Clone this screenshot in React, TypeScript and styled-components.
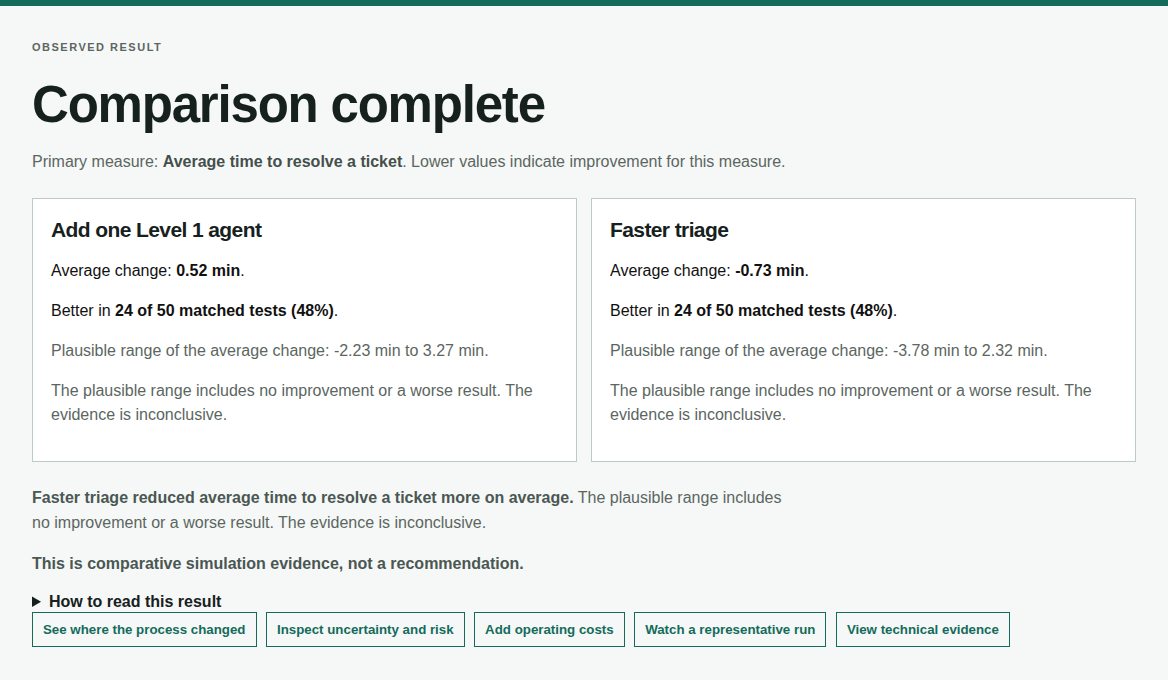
import React from "react";
import styled, { createGlobalStyle } from "styled-components";

const GlobalStyle = createGlobalStyle`
  html, body {
    margin: 0;
    padding: 0;
    background: #f6f8f7;
    font-family: "Liberation Sans", Arial, sans-serif;
  }
`;

const Colors = {
  TEAL: "#146b5c",
  INK: "#16211e",
  MUTED: "#5b6661",
  STRONG_MUTED: "#4a5752",
  BORDER: "#bccbc8",
};

interface IOption {
  name: string;
  change: string;
  better: string;
  range: string;
}

const options: IOption[] = [
  {
    name: "Add one Level 1 agent",
    change: "0.52 min",
    better: "24 of 50 matched tests (48%)",
    range: "-2.23 min to 3.27 min",
  },
  {
    name: "Faster triage",
    change: "-0.73 min",
    better: "24 of 50 matched tests (48%)",
    range: "-3.78 min to 2.32 min",
  },
];

const actions = [
  "See where the process changed",
  "Inspect uncertainty and risk",
  "Add operating costs",
  "Watch a representative run",
  "View technical evidence",
];

const TopBar = styled.div`
  height: 6px;
  background: ${Colors.TEAL};
`;

const Page = styled.main`
  padding: 34px 32px 32px;
`;

const Eyebrow = styled.div`
  font-size: 11px;
  font-weight: 700;
  letter-spacing: 1.5px;
  text-transform: uppercase;
  color: ${Colors.MUTED};
  line-height: 14px;
`;

const Title = styled.h1`
  margin: 22px 0 0;
  font-size: 51px;
  line-height: 58px;
  font-weight: 700;
  letter-spacing: -1.2px;
  color: ${Colors.INK};
`;

const Lead = styled.p`
  margin: 16px 0 0;
  font-size: 16px;
  line-height: 24px;
  color: ${Colors.MUTED};

  strong {
    color: #444f4b;
  }
`;

const CardGrid = styled.div`
  display: grid;
  grid-template-columns: 1fr 1fr;
  gap: 14px;
  margin-top: 24px;
`;

const Card = styled.section`
  background: #fff;
  border: 1px solid ${Colors.BORDER};
  padding: 17px 18px 34px;
`;

const CardTitle = styled.h2`
  margin: 0;
  font-size: 21px;
  line-height: 28px;
  font-weight: 700;
  letter-spacing: -0.6px;
  color: ${Colors.INK};
`;

const Line = styled.p<{ muted?: boolean }>`
  margin: 15px 0 0;
  font-size: 16px;
  line-height: 24px;
  color: ${props => (props.muted ? Colors.MUTED : "#111")};
  & + & {
    margin-top: 16px;
  }
`;

const Summary = styled.p`
  margin: 23px 0 0;
  max-width: 760px;
  font-size: 16px;
  line-height: 25px;
  color: ${Colors.MUTED};

  strong {
    color: ${Colors.STRONG_MUTED};
  }
`;

const Note = styled.p`
  margin: 17px 0 0;
  font-size: 16px;
  line-height: 24px;
  font-weight: 700;
  color: ${Colors.STRONG_MUTED};
`;

const HowTo = styled.details`
  margin-top: 17px;

  summary {
    font-size: 16px;
    line-height: 18px;
    font-weight: 700;
    color: ${Colors.INK};
    cursor: pointer;
  }
`;

const ActionRow = styled.div`
  display: flex;
  flex-wrap: wrap;
  gap: 9.5px;
  margin-top: 1px;
`;

const ActionButton = styled.button`
  height: 35px;
  padding: 0 10px;
  background: transparent;
  border: 1px solid ${Colors.TEAL};
  border-radius: 0;
  font-family: inherit;
  font-size: 13.3px;
  font-weight: 700;
  color: ${Colors.TEAL};
  cursor: pointer;

  &:hover {
    background: #e8f1ef;
  }
`;

function OptionCard(props: { option: IOption }) {
  const { option } = props;
  return <Card>
    <CardTitle>{option.name}</CardTitle>
    <Line>Average change: <strong>{option.change}</strong>.</Line>
    <Line>Better in <strong>{option.better}</strong>.</Line>
    <Line muted>Plausible range of the average change: {option.range}.</Line>
    <Line muted>The plausible range includes no improvement or a worse result. The evidence is inconclusive.</Line>
  </Card>;
}

export default function App() {
  return <>
    <GlobalStyle />
    <TopBar />
    <Page>
      <Eyebrow>Observed result</Eyebrow>
      <Title>Comparison complete</Title>
      <Lead>
        Primary measure: <strong>Average time to resolve a ticket</strong>. Lower values indicate improvement for this measure.
      </Lead>

      <CardGrid>
        {options.map((option, idx) => <OptionCard key={"option-" + idx} option={option} />)}
      </CardGrid>

      <Summary>
        <strong>Faster triage reduced average time to resolve a ticket more on average.</strong> The plausible range includes no improvement or a worse result. The evidence is inconclusive.
      </Summary>
      <Note>This is comparative simulation evidence, not a recommendation.</Note>

      <HowTo>
        <summary>How to read this result</summary>
      </HowTo>
      <ActionRow>
        {actions.map((label, idx) => <ActionButton key={"action-" + idx}>{label}</ActionButton>)}
      </ActionRow>
    </Page>
  </>;
}
